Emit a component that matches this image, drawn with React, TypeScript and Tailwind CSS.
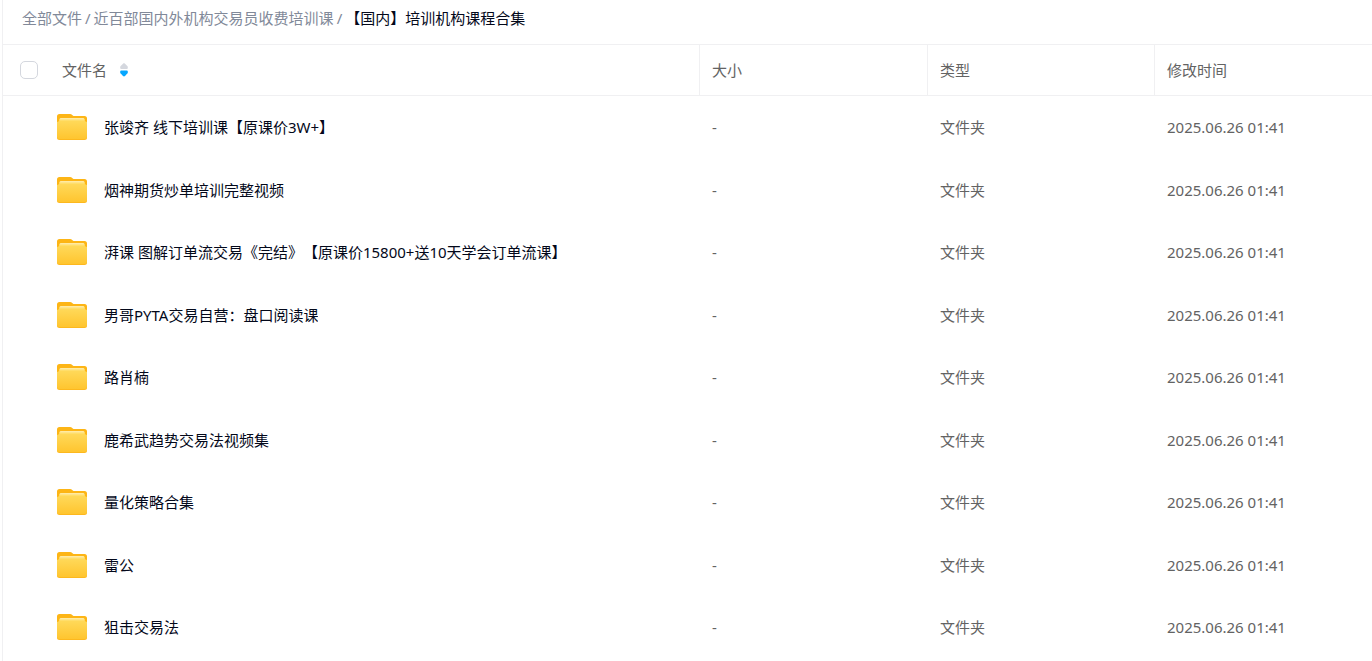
import React, { useState } from 'react';

interface FileItem {
  name: string;
  size: string;
  type: string;
  modified: string;
}

const folder = (name: string): FileItem => ({
  name,
  size: '-',
  type: '文件夹',
  modified: '2025.06.26 01:41',
});

const files: FileItem[] = [
  folder('张竣齐 线下培训课【原课价3W+】'),
  folder('烟神期货炒单培训完整视频'),
  folder('湃课 图解订单流交易《完结》【原课价15800+送10天学会订单流课】'),
  folder('男哥PYTA交易自营：盘口阅读课'),
  folder('路肖楠'),
  folder('鹿希武趋势交易法视频集'),
  folder('量化策略合集'),
  folder('雷公'),
  folder('狙击交易法'),
];

const parents = ['全部文件', '近百部国内外机构交易员收费培训课'];

function FolderIcon() {
  return (
    <svg width="30" height="26" viewBox="0 0 30 26" className="shrink-0" aria-hidden="true">
      <defs>
        <linearGradient id="folder-front" x1="0" y1="0" x2="0" y2="1">
          <stop offset="0" stopColor="#ffdc60" />
          <stop offset="1" stopColor="#ffc52f" />
        </linearGradient>
        <linearGradient id="folder-shine" x1="0" y1="0" x2="0" y2="1">
          <stop offset="0" stopColor="#ffedb0" />
          <stop offset="1" stopColor="#ffdb5e" />
        </linearGradient>
      </defs>
      <path d="M0 2.5A2.5 2.5 0 0 1 2.5 0H13c1 0 1.6.3 2.2.9l.6.5c.4.4.9.6 1.6.6h10.1A2.5 2.5 0 0 1 30 4.500V12H0z" fill="#fdb515" />
      <path d="M0 8C1.500 8 2.500 7 2.500 5.500A1.500 1.500 0 0 1 4 4h22a1.500 1.500 0 0 1 1.500 1.500C27.500 7 28.500 8 30 8v15.500a2.500 2.500 0 0 1-2.500 2.500h-25A2.500 2.500 0 0 1 0 23.500z" fill="#fdb81e" />
      <path d="M0 8C1.500 8 2.500 7 2.500 5.500A1.500 1.500 0 0 1 4 4h22a1.500 1.500 0 0 1 1.500 1.500C27.500 7 28.500 8 30 8v14.500a2.500 2.500 0 0 1-2.500 2.500h-25A2.500 2.500 0 0 1 0 22.500z" fill="url(#folder-front)" />
      <path d="M2.500 7V5.500A1.500 1.500 0 0 1 4 4h22a1.500 1.500 0 0 1 1.500 1.500V7z" fill="url(#folder-shine)" />
    </svg>
  );
}

function SortIcon() {
  return (
    <svg width="8" height="14" viewBox="0 0 8 14" aria-hidden="true">
      <path d="M1.200 6C.5 6 .2 5.700.2 5.100V4.200c0-.5.1-.8.5-1.200L3 .7c.6-.6 1.400-.6 2 0L7.300 3c.4.4.5.7.5 1.200v.9c0 .6-.3.900-1 .9z" fill="#d4d7de" />
      <path d="M1.200 7.500c-.7 0-1 .3-1 .9v1c0 .5.1.8.5 1.200L3 13c.6.6 1.400.6 2 0l2.300-2.400c.4-.4.5-.7.5-1.200v-1c0-.6-.3-.9-1-.9z" fill="#06a7ff" />
    </svg>
  );
}

export default function App() {
  const [descending, setDescending] = useState(true);
  const [allChecked, setAllChecked] = useState(false);
  const rows = descending ? files : [...files].reverse();

  return (
    <div className="min-h-screen pl-0.5 bg-white font-['Noto_Sans','Noto_Sans_CJK_SC',sans-serif] text-[15px] leading-5 [text-spacing-trim:space-all]">
      <div className="min-h-screen border-l border-[#f0f0f2]">
        {/* Breadcrumb */}
        <nav className="flex h-11 items-start gap-[3px] pl-[19px] pt-2 text-[#818999]">
          {parents.map(name => (
            <React.Fragment key={name}>
              <a href="#">{name}</a>
              <span>/</span>
            </React.Fragment>
          ))}
          <span className="text-[#03081a]">【国内】培训机构课程合集</span>
        </nav>

        {/* File list */}
        <table className="w-full table-fixed border-separate border-spacing-0 text-left text-[#636363]">
          <thead>
            <tr className="h-[52px] [&>th]:border-y [&>th]:border-[#f0f0f2] [&>th]:p-0 [&>th]:font-normal">
              <th>
                <div className="flex items-center pl-[17px]">
                  <input
                    type="checkbox"
                    aria-label="全选"
                    checked={allChecked}
                    onChange={e => setAllChecked(e.target.checked)}
                    className="size-[18px] appearance-none rounded-[5px] border border-[#d4d7de] bg-white checked:bg-[#06a7ff]"
                  />
                  <button className="ml-6 flex items-center gap-[13px]" onClick={() => setDescending(!descending)}>
                    文件名
                    <SortIcon />
                  </button>
                </div>
              </th>
              <th className="w-[228px] border-l"><div className="pl-3">大小</div></th>
              <th className="w-[227px] border-l"><div className="pl-3">类型</div></th>
              <th className="w-[218px] border-l"><div className="pl-3">修改时间</div></th>
            </tr>
          </thead>
          <tbody>
            {rows.map(file => (
              <tr key={file.name} className="odd:h-[62px] even:h-[63px] [&>td]:p-0">
                <td>
                  <a href="#" className="flex items-center gap-[17px] pl-[54px] text-[#03081a]">
                    <FolderIcon />
                    <span className="truncate">{file.name}</span>
                  </a>
                </td>
                <td className="pl-[13px]!">{file.size}</td>
                <td className="pl-[13px]!">{file.type}</td>
                <td className="pl-[13px]!">{file.modified}</td>
              </tr>
            ))}
          </tbody>
        </table>
      </div>
    </div>
  );
}
